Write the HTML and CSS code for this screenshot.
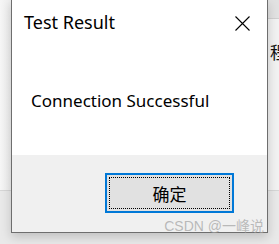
FILE: index.html
```html
<!DOCTYPE html>
<html>
<head>
    <meta charset="UTF-8">
    <title>Test Result</title>
    <link rel="stylesheet" href="styles.css">
</head>
<body>
    <div class="desktop">
        <div class="app-area">
            <div class="left-pane"></div>
            <div class="right-pane">
                <div class="toolbar-strip"></div>
                <div class="pane-text">程</div>
            </div>
        </div>
        <div class="bottom-area"></div>
    </div>

    <!-- Message box window -->
    <div class="dialog">
        <div class="dialog-body">
            <div class="title-row">
                <span class="dialog-title">Test Result</span>
                <svg class="close-icon" width="15" height="15" viewBox="0 0 15 15">
                    <path d="M0.5 0.5 L14.5 14.5 M14.5 0.5 L0.5 14.5" stroke="#000" stroke-width="1.1" fill="none"/>
                </svg>
            </div>
            <p class="message">Connection Successful</p>
        </div>
        <div class="dialog-footer">
            <button class="ok-button"><span class="focus-box">确定</span></button>
        </div>
    </div>

    <div class="watermark">CSDN @一峰说</div>
</body>
</html>
```

FILE: styles.css
```css
body, html {
    margin: 0;
    padding: 0;
}

body {
    width: 279px;
    height: 244px;
    overflow: hidden;
    position: relative;
    font-family: "Noto Sans", "Open Sans", sans-serif;
}

.desktop {
    height: 244px;
    display: flex;
    flex-direction: column;
}

.app-area {
    height: 190px;
    display: flex;
    justify-content: space-between;
    border-bottom: 1px solid #d6d6d6;
    background-color: #f4f4f4;
}

.left-pane {
    width: 11px;
    background: linear-gradient(to right, #f6f6f6, #eeeeee);
}

.right-pane {
    width: 11px;
    background-color: #f2f2f2;
    overflow: hidden;
}

.toolbar-strip {
    height: 18px;
    background-color: #e2e2e2;
    border-bottom: 1px solid #d0d0d0;
}

.pane-text {
    margin-top: 23px;
    margin-left: 2px;
    white-space: nowrap;
    font-family: "Noto Sans CJK SC", sans-serif;
    font-size: 17px;
    line-height: 20px;
    color: #111;
}

.bottom-area {
    flex: 1;
    background-color: #e9e9e9;
}

.dialog {
    position: absolute;
    left: 11px;
    top: 0;
    width: 255px;
    height: 232px;
    border: 1px solid #6e6e6e;
    border-top: none;
    display: flex;
    flex-direction: column;
    box-shadow: 0 4px 10px rgba(0, 0, 0, 0.18);
}

.dialog-body {
    height: 155px;
    background-color: #fff;
}

.title-row {
    display: flex;
    justify-content: space-between;
    align-items: flex-start;
    padding: 10px 17px 0 12px;
}

.dialog-title {
    font-size: 18px;
    line-height: 24px;
    color: #000;
}

.close-icon {
    margin-top: 6px;
}

.message {
    margin: 56px 0 0 19px;
    font-size: 17px;
    line-height: 22px;
    color: #000;
}

.dialog-footer {
    flex: 1;
    background-color: #f0f0f0;
    display: flex;
    justify-content: flex-end;
    align-items: flex-start;
    padding: 18px 33px 0 0;
}

.ok-button {
    width: 129px;
    height: 40px;
    padding: 2px;
    margin: 0;
    border: 2px solid #0078d7;
    background-color: #e1e1e1;
    display: flex;
}

.focus-box {
    flex: 1;
    border: 1px dotted #000;
    display: flex;
    align-items: center;
    justify-content: center;
    font-family: "Noto Sans CJK SC", sans-serif;
    font-size: 17px;
    color: #000;
}

.watermark {
    position: absolute;
    right: 15px;
    top: 217px;
    font-family: "Liberation Sans", "Noto Sans CJK SC", sans-serif;
    font-size: 14px;
    line-height: 18px;
    color: rgba(160, 160, 160, 0.7);
}
```
